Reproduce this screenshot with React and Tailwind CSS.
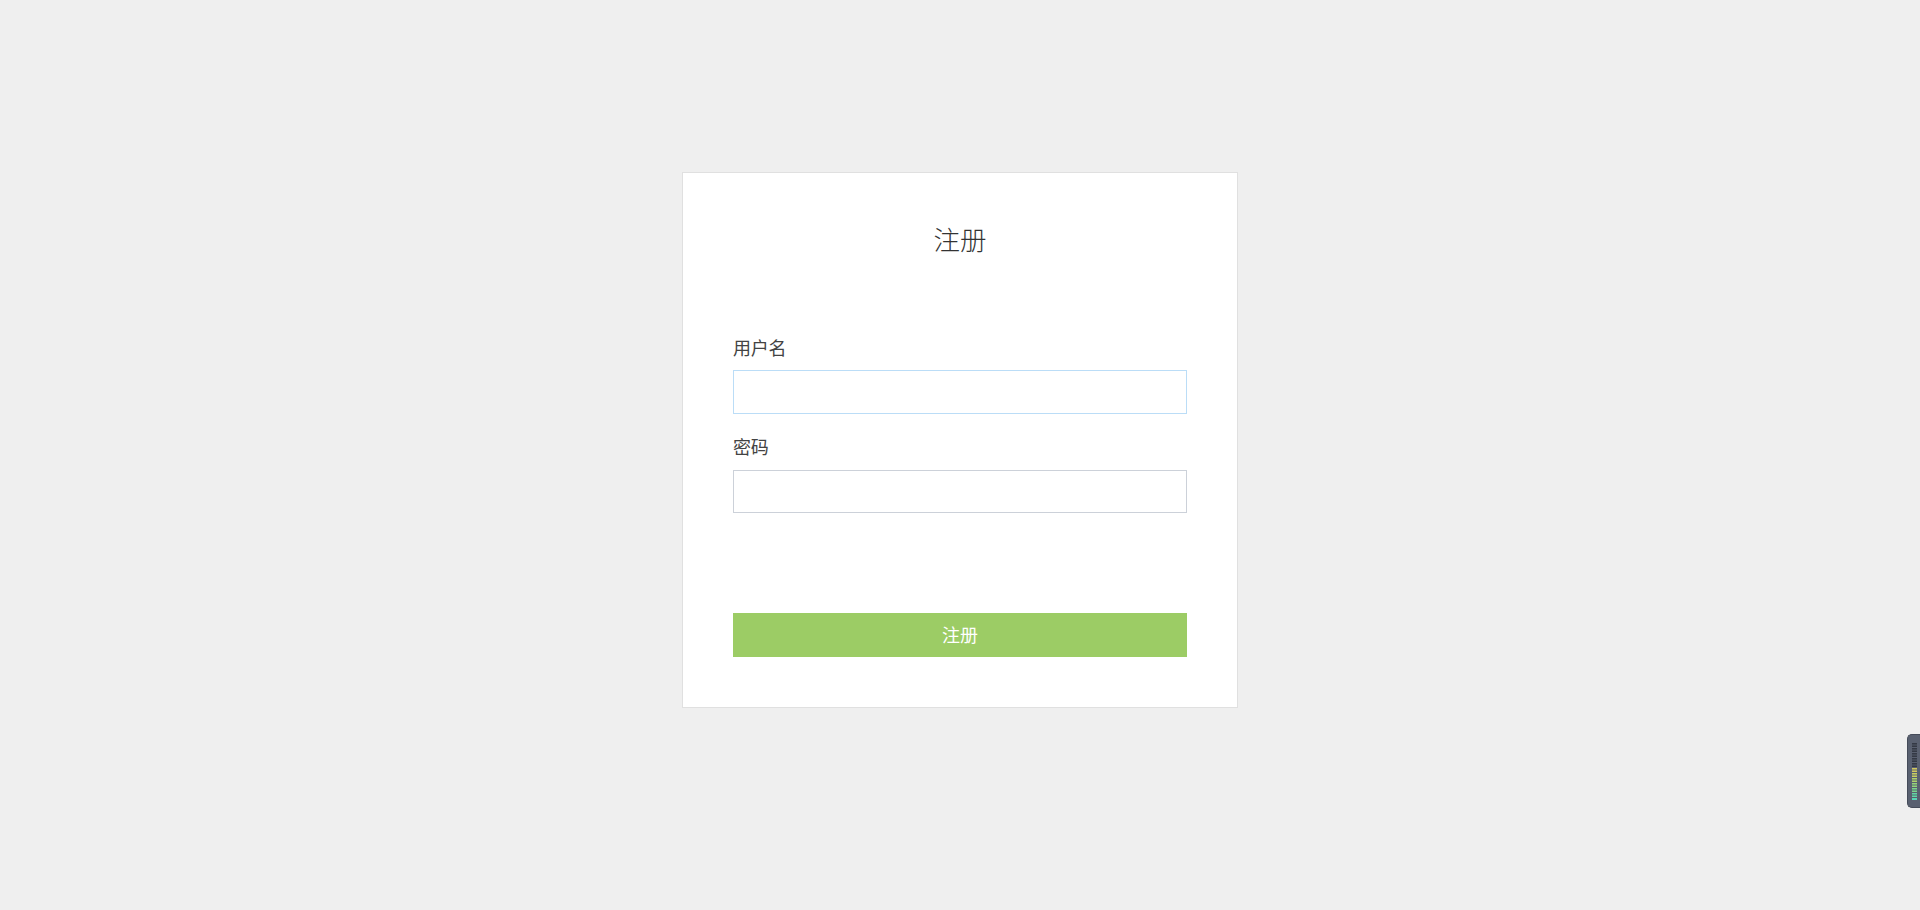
import React from 'react';

const BARS = [
  ['bg-[#343945]', 'bg-[#434956]'],
  ['bg-[#343945]', 'bg-[#434956]'],
  ['bg-[#343945]', 'bg-[#434956]'],
  ['bg-[#343945]', 'bg-[#434956]'],
  ['bg-[#343945]', 'bg-[#434956]'],
  ['bg-[#d3c95f]', 'bg-[#9c9a64]'],
  ['bg-[#c9cf62]', 'bg-[#959d66]'],
  ['bg-[#b0d26c]', 'bg-[#869f6c]'],
  ['bg-[#98d47a]', 'bg-[#75a074]'],
  ['bg-[#7dd58c]', 'bg-[#65a17f]'],
  ['bg-[#66d6a3]', 'bg-[#55a28b]'],
];

const Field = ({ label, type, labelClass, inputClass }) => (
  <label className="block">
    <span className={`block text-[18px] tracking-[-0.3px] ${labelClass}`}>{label}</span>
    <input type={type} className={`block w-full px-3 border bg-white outline-none ${inputClass}`} />
  </label>
);

const App = () => (
  <div className="h-[910px] bg-[#efefef] pt-[172px] overflow-hidden font-['Noto_Sans_CJK_SC',sans-serif] text-[#434343]">
    <form className="mx-auto w-[556px] h-[536px] bg-white border border-[#e0e0e0] px-[50px]">
      <h1 className="pt-[46px] text-center text-[26.5px] leading-[40px] font-light text-[#333333]">注册</h1>
      <div className="mt-[74px] space-y-[20px]">
        <Field label="用户名" type="text" labelClass="leading-[28px]" inputClass="mt-[9px] h-[44px] border-[#bbddf7]" />
        <Field label="密码" type="password" labelClass="leading-[25px]" inputClass="mt-[11px] h-[43px] border-[#ccd1d9]" />
      </div>
      <button type="button" className="block mt-[100px] w-full h-[44px] pb-[2px] bg-[#9ccc65] text-white text-[18px]">注册</button>
    </form>

    {/* Level meter on the screen edge */}
    <div className="fixed right-0 top-[734px] w-[13px] h-[74px] rounded-l-[5px] border border-r-0 border-[#454b59] bg-[#596070] pt-[8px] pl-[4px] space-y-[1px]">
      {BARS.map(([edge, middle], i) => (
        <div key={i} className="w-[5px]">
          <div className={`h-px ${edge}`} />
          <div className={`h-[2px] ${middle}`} />
          <div className={`h-px ${edge}`} />
        </div>
      ))}
      <div className="w-[5px] h-[2px] bg-[#58d6b6]" />
    </div>
  </div>
);

export default App;
